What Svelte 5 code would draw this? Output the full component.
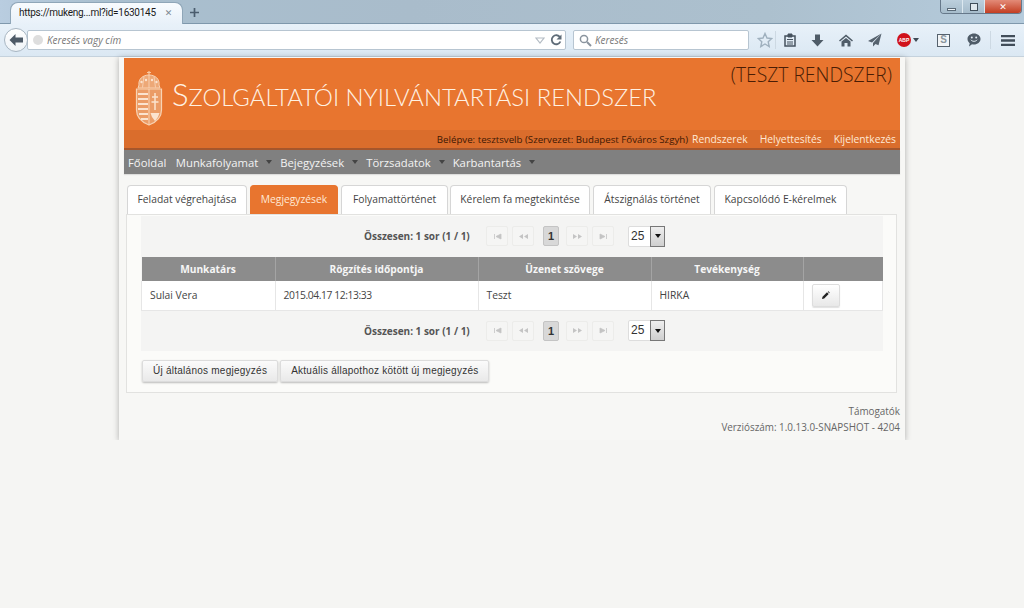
<script>
  const tabs = ['Feladat végrehajtása', 'Megjegyzések', 'Folyamattörténet', 'Kérelem fa megtekintése', 'Átszignálás történet', 'Kapcsolódó E-kérelmek'];
  const menu = ['Munkafolyamat', 'Bejegyzések', 'Törzsadatok', 'Karbantartás'];
  const cols = ['Munkatárs', 'Rögzítés időpontja', 'Üzenet szövege', 'Tevékenység', ''];
  const row = ['Sulai Vera', '2015.04.17 12:13:33', 'Teszt', 'HIRKA'];
</script>

{#snippet pager()}
  <div class="pager">
    <b class="count">Összesen: 1 sor (1 / 1)</b>
    <div class="pg-btns">
      <span class="pg"><svg width="9" height="7" viewBox="0 0 9 7"><path d="M1.500 1v5M8 1v5L3 3.500z" fill="#c4c4c4" stroke="#c4c4c4" stroke-width=".8"/></svg></span>
      <span class="pg"><svg width="11" height="7" viewBox="0 0 11 7"><path d="M5 1v5L1 3.500zM10 1v5L6 3.500z" fill="#c4c4c4"/></svg></span>
      <span class="pg cur">1</span>
      <span class="pg"><svg width="11" height="7" viewBox="0 0 11 7"><path d="M1 1v5l4-2.500zM6 1v5l4-2.500z" fill="#c4c4c4"/></svg></span>
      <span class="pg"><svg width="9" height="7" viewBox="0 0 9 7"><path d="M7.500 1v5M1 1v5l5-2.500z" fill="#c4c4c4" stroke="#c4c4c4" stroke-width=".8"/></svg></span>
    </div>
    <div class="sel"><span class="val">25</span><span class="arr"><i></i></span></div>
  </div>
{/snippet}

<div class="chrome">
  <div class="tabbar">
    <div class="tab-cur"><span>https://mukeng...ml?id=1630145</span><em>✕</em></div>
    <svg class="plus" width="11" height="11" viewBox="0 0 11 11"><path d="M5.500 1v9M1 5.500h9" stroke="#4b5d6e" stroke-width="1.700"/></svg>
    <div class="winctl">
      <span class="w"><i class="min"></i></span>
      <span class="w"><i class="max"></i></span>
      <span class="w close">✕</span>
    </div>
  </div>
  <div class="toolbar">
    <span class="back"><svg width="16" height="14" viewBox="0 0 16 14"><path d="M7.500 1 1.500 7l6 6V9.500H15v-5H7.500z" fill="#4d5a67"/></svg></span>
    <div class="url">
      <span class="globe"></span><span class="ph">Keresés vagy cím</span>
      <svg class="drop" width="10" height="7" viewBox="0 0 10 7"><path d="M1 1h8L5 6z" fill="none" stroke="#b4bcc4" stroke-width="1.200"/></svg>
      <svg class="reload" width="12" height="12" viewBox="0 0 12 12"><path d="M10 3.200A4.500 4.500 0 1 0 10.400 7.500" fill="none" stroke="#5f6c78" stroke-width="1.800"/><path d="M11.500 0.500v5h-5z" fill="#5f6c78"/></svg>
    </div>
    <div class="search">
      <svg width="13" height="13" viewBox="0 0 13 13"><circle cx="5" cy="5" r="3.600" fill="none" stroke="#8a949e" stroke-width="1.500"/><path d="m8 8 4 4" stroke="#8a949e" stroke-width="2"/></svg>
      <span class="ph">Keresés</span>
    </div>
    <div class="icons">
      <svg class="i star" width="16" height="16" viewBox="0 0 16 16"><path d="M8 1.500l2 4.500 4.800.5-3.600 3.200 1 4.800L8 12l-4.200 2.500 1-4.800L1.200 6.500 6 6z" fill="none" stroke="#9fb0be" stroke-width="1.400"/></svg>
      <span class="vsep"></span>
      <svg class="i clip" width="12" height="14" viewBox="0 0 12 14"><path d="M1 3h10v10H1z" fill="none" stroke="#46525e" stroke-width="1.500"/><path d="M4 1h4v3H4zM3 6.500h6M3 9h6M3 11h6" fill="#46525e" stroke="#46525e"/></svg>
      <svg class="i dl" width="13" height="13" viewBox="0 0 13 13"><path d="M4 .5h5v5.500h3.500l-6 6.500-6-6.500H4z" fill="#4f5c68"/></svg>
      <svg class="i home" width="14" height="13" viewBox="0 0 14 13"><path d="M7 .5 0 6.500l1 1 6-5 6 5 1-1z M2.500 7.500 7 4l4.500 3.500V12.500H8.500V9h-3v3.500h-3z" fill="#4f5c68"/></svg>
      <svg class="i send" width="14" height="14" viewBox="0 0 14 14"><path d="M13.500.5 0 8l4 1.500zM13.500.5 5 10v3.500l2.500-2.500 3 1.200z" fill="#55626e"/></svg>
      <span class="i abp"><b>ABP</b></span>
      <svg class="i abpc" width="6" height="4" viewBox="0 0 6 4"><path d="M0 0h6L3 4z" fill="#3f4a55"/></svg>
      <span class="i sq">S</span>
      <svg class="i chat" width="14" height="14" viewBox="0 0 14 14"><path d="M7 .5c3.600 0 6.500 2.400 6.500 5.500S10.600 11.500 7 11.500c-.7 0-1.300-.1-2-.3L2 13.500l.7-3.300C1.300 9.200.5 7.700.5 6 .5 2.900 3.400.5 7 .5z" fill="#4f5c68"/><path d="M3.800 6.800c1.600 2 4.800 2 6.400 0" stroke="#e4eef6" fill="none"/><circle cx="4.800" cy="4.500" r="1" fill="#e4eef6"/><circle cx="9.200" cy="4.500" r="1" fill="#e4eef6"/></svg>
      <span class="vsep sep2"></span>
      <svg class="i burger" width="14" height="11" viewBox="0 0 14 11"><path d="M0 1.200h14M0 5.500h14M0 9.800h14" stroke="#414d59" stroke-width="2.300"/></svg>
    </div>
  </div>
</div>

<div class="sheet">
  <header class="brand">
    <div class="brand-main">
      <svg class="crest" width="28" height="56" viewBox="0 0 28 56">
        <path d="M14 1v4M12 2.500h4" stroke="#f6c8a2" stroke-width="1.200" fill="none"/>
        <path d="M4 15C3 9 8 5 14 5s11 4 10 10l1 3H3z" fill="#eda877" stroke="#f8d3b4"/>
        <path d="M14 5v13M9 6.500l-1.500 11M19 6.500l1.500 11" stroke="#f8d3b4" stroke-width=".9" fill="none"/>
        <circle cx="6.500" cy="12" r="1.200" fill="#fbe3cf"/><circle cx="11" cy="10" r="1.200" fill="#fbe3cf"/><circle cx="17" cy="10" r="1.200" fill="#fbe3cf"/><circle cx="21.500" cy="12" r="1.200" fill="#fbe3cf"/>
        <path d="M1.500 19h25v21c0 8-6 12.500-12.500 15C7.500 52.500 1.500 48 1.500 40z" fill="#eb9c67" stroke="#f8d3b4" stroke-width="1.200"/>
        <path d="M14 19v36" stroke="#f8d3b4"/>
        <path d="M3 24h10M3 29h10M3 34h10M3 39h10M4 44h9M6 49h7" stroke-width="2.200" stroke="#fbe3cf" fill="none"/>
        <path d="M20 23v17M17 27h6M16.500 32h7" stroke="#fbe3cf" stroke-width="1.500" fill="none"/>
        <path d="M15.500 43h9l-1.500 4-3 4-3-4z" fill="#fbe3cf"/>
      </svg>
      <div class="title">Szolgáltatói nyilvántartási rendszer</div>
      <div class="test">(TESZT RENDSZER)</div>
    </div>
    <div class="brand-sub">
      <span class="who">Belépve: tesztsvelb (Szervezet: Budapest Főváros Szgyh)</span>
      <a>Rendszerek</a><a>Helyettesítés</a><a>Kijelentkezés</a>
    </div>
  </header>
  <nav class="nav">
    <a class="home-l">Főoldal</a>
    {#each menu as m}<a>{m}<i class="caret"></i></a>{/each}
  </nav>

  <div class="tabs">
    {#each tabs as t, i}
      <div class="tab" class:active={i === 1}>{t}</div>
    {/each}
  </div>
  <section class="panel">
    <div class="grid-wrap">
      {@render pager()}
      <table>
        <thead><tr>{#each cols as c}<th>{c}</th>{/each}</tr></thead>
        <tbody>
          <tr>
            {#each row as c, i}<td class:date={i === 1}>{c}</td>{/each}
            <td class="act"><span class="edit"><svg width="9" height="9" viewBox="0 0 9 9"><path d="M1 8l.5-2.200L6 1.300l1.700 1.700L3.200 7.500zM6.800.8l.7-.5L8.700 1.500l-.5.7z" fill="#222"/></svg></span></td>
          </tr>
        </tbody>
      </table>
      {@render pager()}
    </div>
    <div class="actions">
      <span class="btn">Új általános megjegyzés</span>
      <span class="btn">Aktuális állapothoz kötött új megjegyzés</span>
    </div>
  </section>
  <footer class="foot">
    <div>Támogatók</div>
    <div>Verziószám: 1.0.13.0-SNAPSHOT - 4204</div>
  </footer>
</div>

<style>
  :global(body) {
    margin: 0;
    background: #f5f5f3;
    font-family: "Open Sans", "Liberation Sans", sans-serif;
    overflow: hidden;
  }
  .chrome { height: 57px; }
  .tabbar {
    height: 24px;
    display: flex;
    align-items: flex-start;
    background: linear-gradient(90deg, #b9cde0 0, #a9bfcf 10%, #a9bccb 40%, #acc0ce 75%, #b5cbdc 100%);
    border-bottom: 1px solid #7f98ac;
    box-sizing: border-box;
  }
  .tab-cur {
    margin: 2px 0 -1px 10px;
    width: 173px;
    height: 22px;
    box-sizing: border-box;
    background: linear-gradient(#f8fbfe, #e8f1f9);
    border: 1px solid #8fa6b8;
    border-bottom: 0;
    border-radius: 8px 8px 0 0;
    display: flex;
    align-items: center;
    padding: 0 0 2px 8px;
    font: 10px "Roboto", sans-serif;
    color: #1a1a1a;
    letter-spacing: -.27px;
    white-space: nowrap;
  }
  .tab-cur span { flex: 1; }
  .tab-cur em { font: bold 9px "DejaVu Sans", sans-serif; color: #7d8892; margin-right: 10px; font-style: normal; }
  .plus { margin: 7px 0 0 6px; }
  .winctl {
    margin-left: auto;
    margin-right: 2px;
    display: flex;
    width: 82px;
    height: 14px;
    border: 1px solid #66788a;
    border-top: 0;
    border-radius: 0 0 4px 4px;
    overflow: hidden;
    box-sizing: border-box;
  }
  .w { flex: 0 0 22px; display: flex; align-items: center; justify-content: center; background: linear-gradient(#bccfdd, #a6bccb); border-right: 1px solid #dce8f0; box-sizing: border-box; }
  .w.close { flex: 1; border: 0; background: linear-gradient(#e38b78, #c33e22); color: #fff; font: bold 9px "DejaVu Sans", sans-serif; }
  .w .min { width: 9px; height: 3px; background: #eef3f7; border: 1px solid #5a6a78; margin-top: 5px; box-sizing: border-box; }
  .w .max { width: 8px; height: 8px; border: 1px solid #3f4d5a; background: #dfe8ee; box-sizing: border-box; }
  .toolbar {
    height: 33px;
    box-sizing: border-box;
    background: linear-gradient(#e8f1f9, #dbe8f3);
    border-bottom: 1px solid #c5d2dd;
    display: flex;
    align-items: center;
    padding-left: 4px;
  }
  .back {
    width: 24px; height: 24px; border-radius: 50%;
    background: linear-gradient(#fff, #eef3f7);
    border: 1px solid #a8b6c2;
    box-sizing: border-box;
    display: flex; align-items: center; justify-content: center;
    position: relative; z-index: 1;
    margin-right: -1px;
  }
  .url, .search {
    height: 20px;
    background: #fff;
    border: 1px solid #b7c5d1;
    box-sizing: border-box;
    border-radius: 2px;
    display: flex;
    align-items: center;
    font: italic 10px "Open Sans", sans-serif;
    color: #777;
  }
  .url { width: 539px; padding: 0 3px 0 5px; }
  .globe { width: 10px; height: 10px; border-radius: 50%; background: #dedede; margin-right: 4px; }
  .url .ph { flex: 1; }
  .drop { margin-right: 5px; }
  .search { width: 176px; margin-left: 7px; padding-left: 5px; }
  .search .ph { margin-left: 3px; }
  .icons { flex: 1; height: 100%; display: flex; align-items: center; }
  .i { flex: none; }
  .star { margin-left: 8px; }
  .vsep { width: 1px; height: 18px; background: #cdd9e3; margin-left: 2px; }
  .clip { margin-left: 8px; }
  .dl { margin-left: 15px; }
  .home { margin-left: 15px; }
  .send { margin-left: 15px; }
  .abp {
    margin-left: 15px; width: 14px; height: 14px; border-radius: 50%;
    background: #d0121b; color: #fff; display: flex; align-items: center; justify-content: center;
  }
  .abp b { font: bold 5px "Liberation Sans", sans-serif; }
  .abpc { margin-left: 2px; }
  .sq {
    margin-left: 18px; width: 13px; height: 13px; box-sizing: border-box; border: 1.500px solid #56626d;
    background: #f2f5f7; color: #8b959e; font: bold 10px/10px "Liberation Sans", sans-serif; text-align: center;
  }
  .chat { margin-left: 17px; }
  .sep2 { margin-left: 9px; }
  .burger { margin-left: 10px; }

  .sheet {
    width: 786px;
    height: 383px;
    margin: 0 auto;
    box-sizing: border-box;
    padding: 1px 5px 0;
    background: #f7f7f5;
    box-shadow: 0 1px 6px rgba(0,0,0,.3);
    color: #444;
  }
  .brand-main {
    height: 72px;
    background: #e8752f;
    position: relative;
    display: flex;
    align-items: center;
    padding-left: 11px;
  }
  .crest { margin-top: 8px; flex: none; }
  .title {
    margin-left: 9px;
    font: 300 23.850px "Lato", sans-serif;
    text-transform: uppercase;
    color: #fff1e2;
    white-space: nowrap;
  }
  .title::first-letter { font-size: 31px; }
  .test {
    position: absolute;
    right: 8px;
    top: 3px;
    font: 300 19.300px "Open Sans", sans-serif;
    color: #4a1d05;
  }
  .brand-sub {
    height: 20px;
    box-sizing: border-box;
    background: #da6d2c;
    border-bottom: 2px solid #a5562c;
    display: flex;
    justify-content: flex-end;
    align-items: center;
    padding-right: 4px;
    font-size: 10.300px;
    color: #ffe9d5;
    white-space: nowrap;
  }
  .who { color: #3e1804; margin-right: 4px; font-size: 9.700px; }
  .brand-sub a { margin-left: 12px; }
  .brand-sub a:first-of-type { margin-left: 0; }
  .nav {
    height: 24px;
    background: #808080;
    display: flex;
    align-items: center;
    padding-left: 4px;
    color: #f3f3f3;
    font-size: 11.300px;
    box-shadow: 0 1px 1px rgba(0,0,0,.1);
  }
  .nav a { display: flex; align-items: center; margin-right: 6px; }
  .nav .home-l { margin-right: 9.500px; }
  .caret { width: 0; height: 0; border: 3px solid transparent; border-top: 4px solid #444; border-bottom: 0; margin-left: 8px; margin-right: 2px; }
  .tabs { display: flex; gap: 3px; padding: 11px 0 0 3px; height: 28px; }
  .tab {
    box-sizing: border-box;
    height: 29px;
    background: #fff;
    border: 1px solid #d6d6d6;
    border-bottom: 0;
    border-radius: 4px 4px 0 0;
    font-size: 10.300px;
    line-height: 27px;
    text-align: center;
    color: #444;
    white-space: nowrap;
    position: relative;
    z-index: 1;
  }
  .tab:nth-child(1) { width: 120px; }
  .tab:nth-child(2) { width: 88px; }
  .tab:nth-child(3) { width: 107px; margin-right: -1px; }
  .tab:nth-child(4) { width: 140px; }
  .tab:nth-child(5) { width: 118px; }
  .tab:nth-child(6) { width: 133px; }
  .tab.active { background: #e8752f; border-color: #e8752f; color: #ffe9d5; }
  .panel {
    margin: 1px 3px 0 2px;
    height: 179px;
    box-sizing: border-box;
    background: #fbfbf9;
    border: 1px solid #e2e2e0;
    padding: 1px 13px 0 14px;
  }
  .grid-wrap { background: #f4f4f3; width: 742px; height: 135px; }
  .pager { height: 40px; display: flex; align-items: center; }
  .count { margin-left: 223px; width: 122px; font-size: 10px; font-weight: 700; color: #555; white-space: nowrap; }
  .pg-btns { display: flex; gap: 4px; }
  .pg {
    width: 22px; height: 20px; display: flex; align-items: center; justify-content: center;
    border: 1px solid #ececea; border-radius: 2px; box-sizing: border-box; background: #f5f5f4;
    font: bold 11px "Liberation Sans", sans-serif; color: #333;
  }
  .pg.cur { width: 16px; background: #d8d8d8; border-color: #c4c4c4; margin: 0 3px 0 5px; }
  .sel {
    display: flex; width: 37px; height: 21px; margin-left: 14px; box-sizing: border-box;
    background: #fff; border: 1px solid #ddd; border-radius: 2px;
    font: 12px "Liberation Sans", sans-serif; color: #333;
  }
  .val { flex: 1; line-height: 19px; padding-left: 2px; }
  .arr { width: 13px; margin: -1px; border: 1px solid #777; background: linear-gradient(#eee, #cfcfcf); display: flex; align-items: center; justify-content: center; }
  .arr i { width: 0; height: 0; border: 3.500px solid transparent; border-top: 4px solid #111; border-bottom: 0; }
  table { width: 742px; border-collapse: collapse; table-layout: fixed; margin-top: 1px; }
  th {
    background: #8c8c8c; color: #f6f6f6; height: 24px; padding: 0;
    font-size: 10.200px; font-weight: 700; border-left: 1px solid #a4a4a4;
  }
  th:first-child { width: 133px; border-left: 0; }
  th:nth-child(2) { width: 202px; }
  th:nth-child(3) { width: 172px; }
  th:nth-child(4) { width: 151px; }
  td {
    background: #fff; height: 29px; padding: 0 0 0 8px; font-size: 10.300px; color: #444;
    border-left: 1px solid #e6e6e6; border-bottom: 1px solid #e6e6e6; box-sizing: border-box;
  }
  td:last-child { border-right: 1px solid #e6e6e6; }
  .date { letter-spacing: -.4px; }
  .edit {
    display: flex; width: 28px; height: 23px; align-items: center; justify-content: center;
    border-radius: 2px; background: linear-gradient(#fff, #e8e8e8); border: 1px solid #ddd; box-sizing: border-box;
    box-shadow: 0 1px 1px rgba(0,0,0,.12);
  }
  .actions { display: flex; gap: 2px; margin: 9px 0 0 1px; }
  .btn {
    height: 22px; box-sizing: border-box; padding: 0 10px;
    background: linear-gradient(#fbfbfb, #e9e9e9);
    border: 1px solid #dcdcdc; border-radius: 2px;
    box-shadow: 0 1px 2px rgba(0,0,0,.25);
    font: 10px/20px "Liberation Sans", sans-serif; letter-spacing: .25px; color: #333; white-space: nowrap;
  }
  .foot { text-align: right; font-size: 9.900px; color: #666; margin-top: 10px; line-height: 16px; }
</style>
